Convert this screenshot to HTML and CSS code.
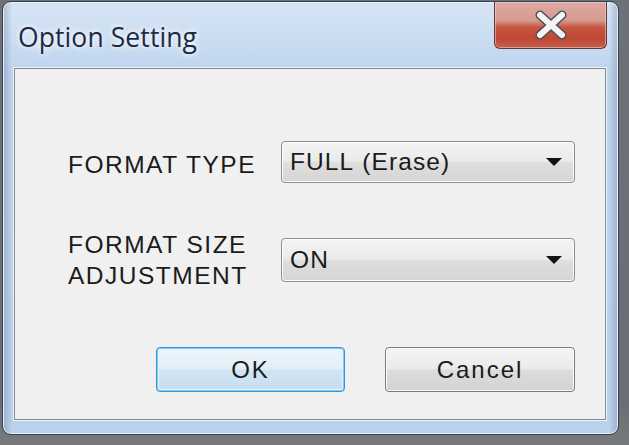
FILE: index.html
```html
<!DOCTYPE html>
<html>
<head>
<meta charset="utf-8">
<link rel="stylesheet" href="styles.css">
</head>
<body>
<div class="screen">
  <div class="window">
    <div class="titlebar">
      <div class="title">Option Setting</div>
      <div class="close" aria-label="Close">
        <svg width="40" height="30" viewBox="0 0 40 30">
          <path d="M9 5 L31 25 M31 5 L9 25" stroke="#4a4f57" stroke-width="9" stroke-linecap="round"/>
          <path d="M9 5 L31 25 M31 5 L9 25" stroke="#f4f4f4" stroke-width="6" stroke-linecap="round"/>
        </svg>
      </div>
    </div>
    <div class="client">
      <div class="form">
        <div class="label">FORMAT TYPE</div>
        <div class="select"><span class="val">FULL (Erase)</span><span class="arrow"></span></div>
        <div class="label two">FORMAT SIZE<br>ADJUSTMENT</div>
        <div class="select tall"><span class="val">ON</span><span class="arrow"></span></div>
      </div>
      <div class="buttons">
        <div class="btn ok">OK</div>
        <div class="btn cancel">Cancel</div>
      </div>
    </div>
  </div>
</div>
</body>
</html>
```

FILE: styles.css
```css
html, body {
  margin: 0;
  padding: 0;
}
body {
  width: 629px;
  height: 445px;
  overflow: hidden;
  background: #5a5f66;
}
.screen {
  width: 629px;
  height: 445px;
  background: linear-gradient(180deg, #6d7178 0%, #6a6e74 90%, #77797c 100%);
  padding: 1px 0 0 2px;
  box-sizing: border-box;
}
.window {
  width: 617px;
  height: 434px;
  box-sizing: border-box;
  border: 1px solid #34404f;
  border-radius: 9px;
  background:
    linear-gradient(90deg, rgba(90,110,140,0.35) 0px, rgba(255,255,255,0) 9px, rgba(255,255,255,0) 606px, rgba(90,110,140,0.35) 615px),
    linear-gradient(180deg, #d6e5f5 0px, #c9dcf1 40px, #bfd5ee 66px, #bad1ec 100%);
  box-shadow: inset 0 0 0 1px #e9f2fb;
  display: flex;
  flex-direction: column;
  padding: 0 12px 14px 11px;
}
.titlebar {
  height: 66px;
  display: flex;
  align-items: flex-start;
  justify-content: space-between;
  flex-shrink: 0;
}
.title {
  font-family: "Open Sans", "Noto Sans", sans-serif;
  font-size: 26.5px;
  line-height: 36px;
  color: #1e2a44;
  padding: 17px 0 0 4px;
  letter-spacing: 0.1px;
  text-shadow: 0 0 8px #ffffff, 0 0 4px #eef5fd;
}
.close {
  width: 113px;
  height: 47px;
  box-sizing: border-box;
  border: 1px solid #5b3a38;
  border-top: none;
  border-radius: 0 0 6px 6px;
  background: linear-gradient(180deg, #dcaaa2 0%, #d69a90 40%, #c8553f 55%, #c04735 80%, #c8604e 100%);
  box-shadow: inset 0 0 0 1px rgba(255,220,210,0.5);
  display: flex;
  align-items: center;
  justify-content: center;
  margin-right: -1px;
}
.client {
  flex: 1;
  background: #f0f0f0;
  border: 1px solid #868b92;
  box-shadow: 0 0 0 1px #eef4fb;
  display: flex;
  flex-direction: column;
  font-family: "Liberation Sans", Arial, sans-serif;
  color: #1b1b1b;
}
.form {
  display: grid;
  grid-template-columns: 213px 294px;
  row-gap: 46px;
  align-items: center;
  padding: 72px 0 0 53px;
}
.label {
  font-size: 24.5px;
  letter-spacing: 1.5px;
  line-height: 31px;
  padding-top: 4px;
}
.label.two {
  padding-top: 0;
}
.select {
  height: 42px;
  box-sizing: border-box;
  border: 1px solid #8d8d8d;
  border-radius: 4px;
  background: linear-gradient(180deg, #f4f4f4 0%, #eaeaea 48%, #dedede 52%, #d5d5d5 100%);
  box-shadow: inset 0 0 0 1px #fbfbfb;
  display: flex;
  align-items: center;
  justify-content: space-between;
  padding: 0 12px 0 8px;
}
.select.tall {
  height: 44px;
}
.val {
  font-size: 24.5px;
  letter-spacing: 1.1px;
  word-spacing: 1px;
}
.arrow {
  width: 0;
  height: 0;
  border-left: 8px solid transparent;
  border-right: 8px solid transparent;
  border-top: 8px solid #111;
}
.buttons {
  display: flex;
  gap: 40px;
  padding: 56px 0 0 141px;
}
.btn {
  width: 189px;
  height: 45px;
  box-sizing: border-box;
  border-radius: 4px;
  display: flex;
  align-items: center;
  justify-content: center;
  font-size: 24px;
  letter-spacing: 2px;
}
.ok {
  border: 1px solid #3a94d8;
  background: linear-gradient(180deg, #eef6fc 0%, #e1eef8 48%, #d0e4f3 52%, #c7def1 100%);
  box-shadow: inset 0 0 0 1px #7fcaf0, inset 0 0 0 2px #e8f4fc;
}
.cancel {
  width: 190px;
  border: 1px solid #7a7a7a;
  background: linear-gradient(180deg, #f4f4f4 0%, #ebebeb 48%, #dddddd 52%, #d2d2d2 100%);
  box-shadow: inset 0 0 0 1px #fbfbfb;
}
```
